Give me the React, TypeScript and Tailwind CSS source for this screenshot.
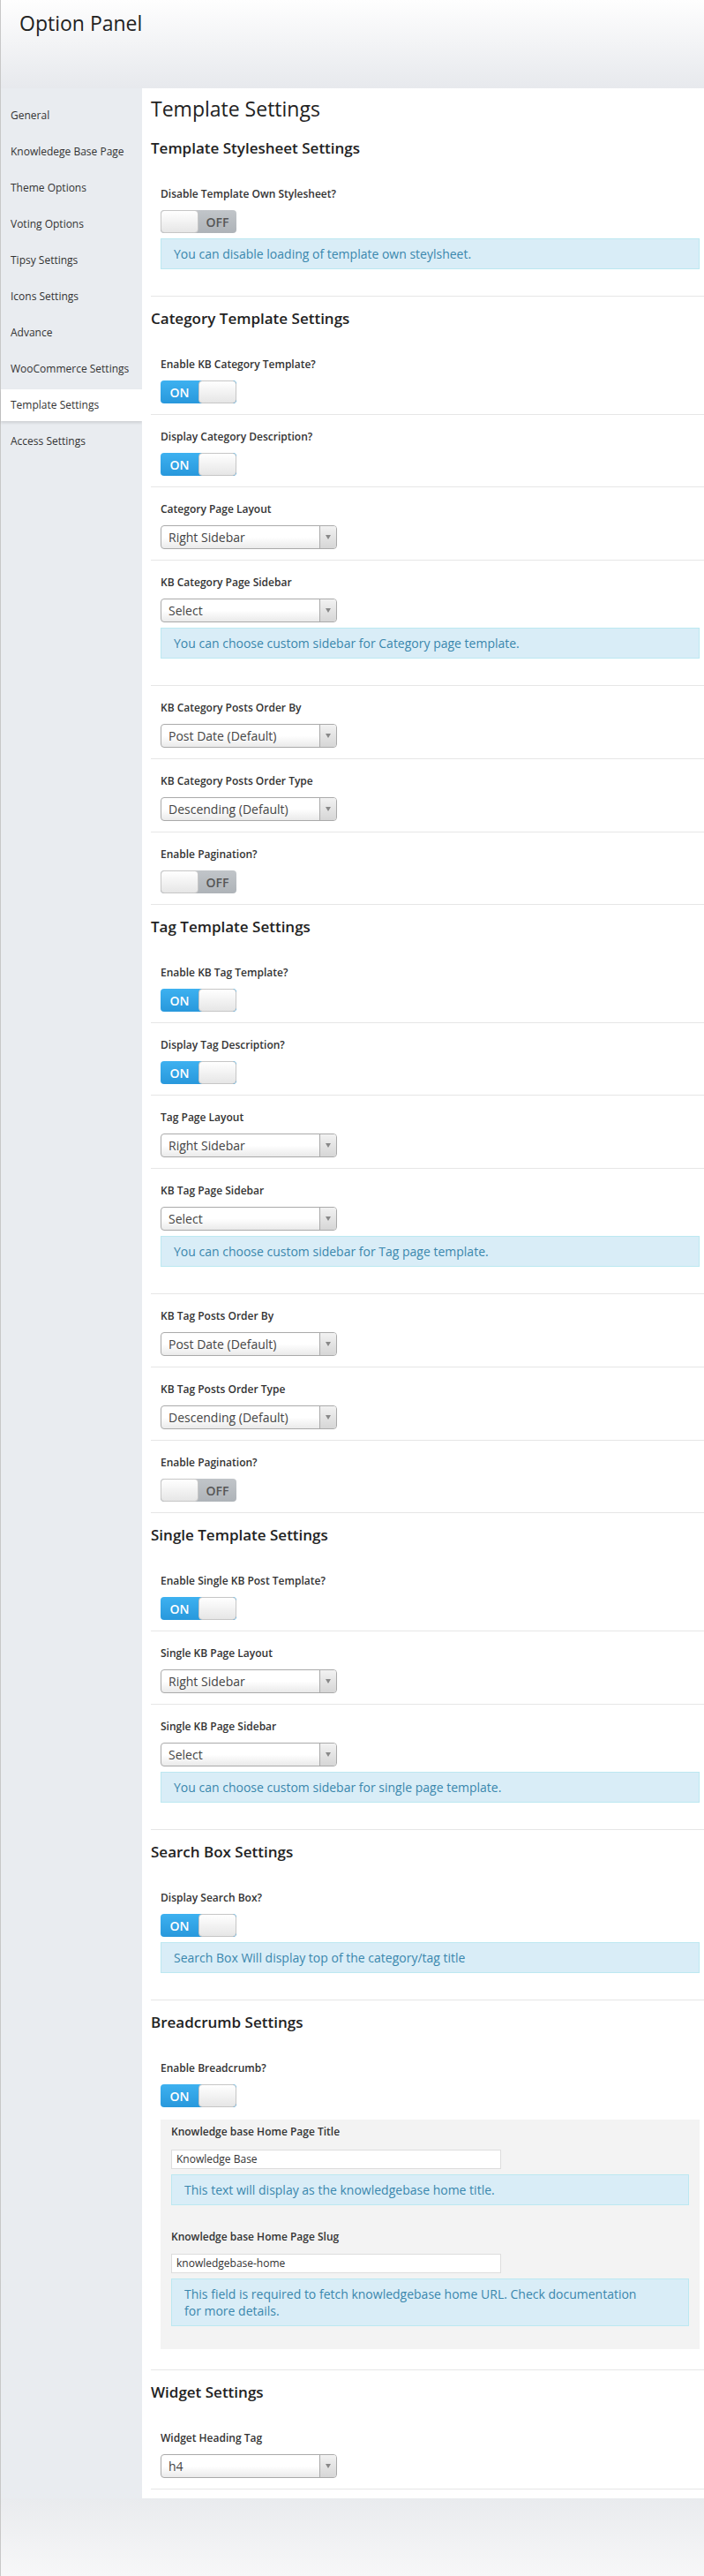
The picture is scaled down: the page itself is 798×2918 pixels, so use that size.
import React from 'react';

type Row =
  | { kind: 'toggle'; label: string; on: boolean; info?: string }
  | { kind: 'select'; label: string; value: string; info?: string }
  | { kind: 'breadcrumb'; label: string };

type Section = { title: string; rows: Row[] };

const menuItems = [
  'General',
  'Knowledege Base Page',
  'Theme Options',
  'Voting Options',
  'Tipsy Settings',
  'Icons Settings',
  'Advance',
  'WooCommerce Settings',
  'Template Settings',
  'Access Settings',
];

const sections: Section[] = [
  {
    title: 'Template Stylesheet Settings',
    rows: [
      {
        kind: 'toggle',
        label: 'Disable Template Own Stylesheet?',
        on: false,
        info: 'You can disable loading of template own steylsheet.',
      },
    ],
  },
  {
    title: 'Category Template Settings',
    rows: [
      { kind: 'toggle', label: 'Enable KB Category Template?', on: true },
      { kind: 'toggle', label: 'Display Category Description?', on: true },
      { kind: 'select', label: 'Category Page Layout', value: 'Right Sidebar' },
      {
        kind: 'select',
        label: 'KB Category Page Sidebar',
        value: 'Select',
        info: 'You can choose custom sidebar for Category page template.',
      },
      { kind: 'select', label: 'KB Category Posts Order By', value: 'Post Date (Default)' },
      { kind: 'select', label: 'KB Category Posts Order Type', value: 'Descending (Default)' },
      { kind: 'toggle', label: 'Enable Pagination?', on: false },
    ],
  },
  {
    title: 'Tag Template Settings',
    rows: [
      { kind: 'toggle', label: 'Enable KB Tag Template?', on: true },
      { kind: 'toggle', label: 'Display Tag Description?', on: true },
      { kind: 'select', label: 'Tag Page Layout', value: 'Right Sidebar' },
      {
        kind: 'select',
        label: 'KB Tag Page Sidebar',
        value: 'Select',
        info: 'You can choose custom sidebar for Tag page template.',
      },
      { kind: 'select', label: 'KB Tag Posts Order By', value: 'Post Date (Default)' },
      { kind: 'select', label: 'KB Tag Posts Order Type', value: 'Descending (Default)' },
      { kind: 'toggle', label: 'Enable Pagination?', on: false },
    ],
  },
  {
    title: 'Single Template Settings',
    rows: [
      { kind: 'toggle', label: 'Enable Single KB Post Template?', on: true },
      { kind: 'select', label: 'Single KB Page Layout', value: 'Right Sidebar' },
      {
        kind: 'select',
        label: 'Single KB Page Sidebar',
        value: 'Select',
        info: 'You can choose custom sidebar for single page template.',
      },
    ],
  },
  {
    title: 'Search Box Settings',
    rows: [
      {
        kind: 'toggle',
        label: 'Display Search Box?',
        on: true,
        info: 'Search Box Will display top of the category/tag title',
      },
    ],
  },
  {
    title: 'Breadcrumb Settings',
    rows: [{ kind: 'breadcrumb', label: 'Enable Breadcrumb?' }],
  },
  {
    title: 'Widget Settings',
    rows: [{ kind: 'select', label: 'Widget Heading Tag', value: 'h4' }],
  },
];

const Toggle = ({ on }: { on: boolean }) => {
  const knob = (
    <span className="h-full w-[43px] rounded-[4px] border border-[#c6c6c6] bg-linear-to-b from-white to-[#e6e6e6]" />
  );
  return (
    <div
      className={`flex h-[26px] w-[86px] overflow-hidden rounded-[4px] bg-linear-to-b ${
        on ? 'from-[#3db1f0] to-[#2898dc]' : 'from-[#c1c5c9] to-[#aeb3b8]'
      }`}
    >
      {on ? (
        <>
          <span className="flex w-[43px] items-center justify-center text-[14px] font-semibold text-white">ON</span>
          {knob}
        </>
      ) : (
        <>
          {knob}
          <span className="flex w-[43px] items-center justify-center text-[14px] font-semibold text-[#555]">OFF</span>
        </>
      )}
    </div>
  );
};

const Select = ({ value }: { value: string }) => (
  <div className="flex h-[27px] w-[200px] items-center overflow-hidden rounded-[4px] border border-[#aaa] bg-linear-to-b from-white from-50% to-[#eaeaea]">
    <span className="flex-1 truncate pl-[8px] text-[14px] leading-[25px] text-[#444]">{value}</span>
    <span className="flex h-full w-[19px] items-center justify-center border-l border-[#aaa] bg-linear-to-b from-[#f2f2f2] to-[#d6d6d6]">
      <span className="h-0 w-0 border-x-[3px] border-t-[5px] border-x-transparent border-t-[#888]" />
    </span>
  </div>
);

const Info = ({ children, className = '' }: { children: React.ReactNode; className?: string }) => (
  <div
    className={`border border-[#bce8f1] bg-[#d9edf7] py-[7px] pl-[14px] pr-[35px] text-[14px] leading-[19px] text-[#3a87ad] ${className}`}
  >
    {children}
  </div>
);

const Label = ({ children }: { children: React.ReactNode }) => (
  <div className="text-[12px] font-semibold leading-[16px] text-[#333]">{children}</div>
);

const TextInput = ({ value }: { value: string }) => (
  <div className="h-[22px] w-[374px] border border-[#ddd] bg-white pl-[5px] text-[12px] leading-[20px] text-[#333]">
    {value}
  </div>
);

const BreadcrumbBox = () => (
  <div className="mt-[14px] mb-[11px] bg-[#f3f3f3] px-[12px] pt-[6px] pb-[26px]">
    <Label>Knowledge base Home Page Title</Label>
    <div className="mt-[12px]">
      <TextInput value="Knowledge Base" />
    </div>
    <Info className="mt-[6px]">This text will display as the knowledgebase home title.</Info>
    <div className="mt-[28px]">
      <Label>Knowledge base Home Page Slug</Label>
    </div>
    <div className="mt-[11px]">
      <TextInput value="knowledgebase-home" />
    </div>
    <Info className="mt-[6px]">
      This field is required to fetch knowledgebase home URL. Check documentation
      <br />
      for more details.
    </Info>
  </div>
);

const SettingRow = ({ row }: { row: Row }) => (
  <div className="border-b border-[#e6e6e6] pt-[17px] pr-[5px] pb-[12px] pl-[11px]">
    <Label>{row.label}</Label>
    <div className="mt-[10px]">
      {row.kind === 'select' ? <Select value={row.value} /> : <Toggle on={row.kind === 'toggle' ? row.on : true} />}
    </div>
    {row.kind !== 'breadcrumb' && row.info && <Info className="mt-[6px] mb-[18px]">{row.info}</Info>}
    {row.kind === 'breadcrumb' && <BreadcrumbBox />}
  </div>
);

export default function App() {
  return (
    <div className="flex min-h-[2918px] w-[798px] flex-col border-l border-[#c8c8c8] font-['Open_Sans',sans-serif]">
      <header className="h-[100px] bg-linear-to-b from-[#fefefe] to-[#e7e9ed] pt-[10px] pl-[21px]">
        <h1 className="text-[23px] leading-[32px] text-[#222]">Option Panel</h1>
      </header>

      <div className="flex">
        <nav className="w-[160px] shrink-0 bg-[#e9ecf0] pt-[13px]">
          {menuItems.map((item) => (
            <div
              key={item}
              className={`mb-[5px] flex h-[36px] items-center pl-[11px] text-[12px] text-[#333] ${
                item === 'Template Settings' ? 'bg-white shadow-[0_2px_3px_rgba(0,0,0,0.12)]' : ''
              }`}
            >
              {item}
            </div>
          ))}
        </nav>

        <main className="flex-1 bg-white pt-[7px] pb-[10px] pl-[10px]">
          <h2 className="mb-[4px] text-[23px] leading-[32px] text-[#222]">Template Settings</h2>
          {sections.map((section) => (
            <section key={section.title}>
              <h3 className="pt-[13px] pb-[15px] text-[17px] font-semibold leading-[24px] text-[#222]">
                {section.title}
              </h3>
              {section.rows.map((row) => (
                <SettingRow key={row.label + section.title} row={row} />
              ))}
            </section>
          ))}
        </main>
      </div>

      <footer className="flex-1 bg-linear-to-b from-[#e9ebee] to-[#f7f7f8]" />
    </div>
  );
}
